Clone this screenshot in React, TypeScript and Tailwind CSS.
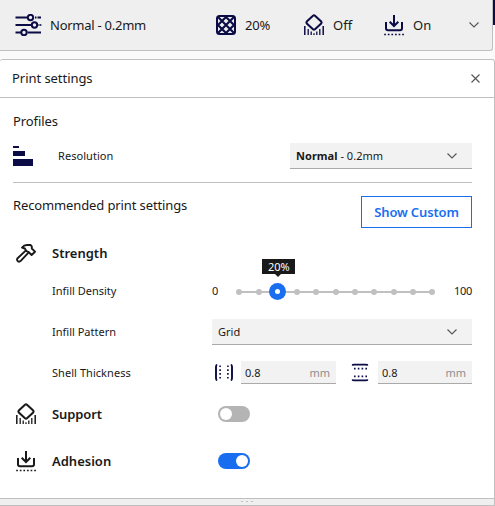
import React from "react";

const NAVY = "#0b0b45";

function SlidersIcon() {
  return (
    <svg width="27" height="22" viewBox="0 0 27 22" fill="none" stroke={NAVY} strokeWidth="2">
      <path d="M.5 3.5H12M20 3.5H21.5M22.5 3.5H26M.5 11H16M23.5 11H24.5M25.2 11H26.3M.5 18.5H6M12.5 18.5H26" />
      <circle cx="15.5" cy="3.5" r="2.7" />
      <circle cx="19.5" cy="11" r="2.7" />
      <circle cx="9" cy="18.5" r="2.7" />
    </svg>
  );
}

function InfillIcon() {
  return (
    <svg width="20" height="20" viewBox="0 0 20 20" fill="none" stroke={NAVY}>
      <rect x="1" y="1" width="18" height="18" rx="2.5" strokeWidth="2" />
      <path
        d="M2 2L18 18M18 2L2 18M1 11L11 1M19 11L9 1M1 9L11 19M19 9L9 19"
        strokeWidth="2.2"
      />
    </svg>
  );
}

function SupportIcon({ color }: { color: string }) {
  return (
    <svg width="20" height="22" viewBox="0 0 20 22" fill="none" stroke={color} strokeWidth="2">
      <path d="M9 1.700Q10 .8 11 1.700L17.200 7.500Q18 8.500 17.200 9.500L11 15.300Q10 16.200 9 15.300L2.800 9.500Q2 8.500 2.800 7.500Z" />
      <path d="M.8 12V21M19.200 12V21" strokeWidth="1.500" />
      <path d="M4.200 15V21M15.800 15V21M7.200 17.500V21M12.800 17.500V21M10 19.200V21" strokeWidth="1.300" />
    </svg>
  );
}

function AdhesionIcon({ color }: { color: string }) {
  return (
    <svg width="20" height="21" viewBox="0 0 20 21" fill="none" stroke={color} strokeWidth="2">
      <path d="M10 0V11M5.700 6.700L10 11L14.300 6.700" />
      <path d="M2 7V13.300Q2 15.300 4 15.300H16Q18 15.300 18 13.300V7" />
      <path d="M.2 19.500H20" strokeWidth="1.700" strokeDasharray="1.700 1.900" />
    </svg>
  );
}

function HammerIcon() {
  return (
    <svg width="20" height="19" viewBox="0 0 20 19" fill="none" stroke="#191919" strokeWidth="1.900" strokeLinejoin="round">
      <path d="M6 3.500Q8 1 11 1H14.500L15.800 2.300V4.500L19 7.700L15.600 11L12.300 7.800L10.500 7.200L8.800 4.500Z" />
      <path d="M9.700 6.600L1.600 14.200Q.5 15.500 1.600 16.800Q3 18.300 4.500 17.100L12.500 8.700" />
    </svg>
  );
}

function ResolutionIcon() {
  return (
    <div className="flex w-[39px] flex-col items-start">
      <div className="h-[2px] w-[6px] bg-[#0b0b45]" />
      <div className="mt-[3px] h-[5px] w-[12px] bg-[#0b0b45]" />
      <div className="mt-[3px] h-[7px] w-[20px] bg-[#0b0b45]" />
    </div>
  );
}

function WallIcon({ rotated = false }: { rotated?: boolean }) {
  return (
    <svg className={rotated ? "rotate-90" : ""} width="18" height="17" viewBox="0 0 18 17" fill="none" stroke={NAVY}>
      <path d="M2.200 .8Q1 1 1 3V14Q1 16 2.200 16.200M15.800 .8Q17 1 17 3V14Q17 16 15.800 16.200" strokeWidth="1.900" />
      <path d="M5.100 1.500V16M12.900 1.500V16" strokeWidth="1.600" strokeDasharray="1.600 2.200" />
    </svg>
  );
}

function Chevron() {
  return (
    <svg width="10" height="6" viewBox="0 0 10 6" fill="none" stroke="#555" strokeWidth="1.100">
      <path d="M.5 .5L5 5L9.500 .5" />
    </svg>
  );
}

function Toggle({ on }: { on: boolean }) {
  return (
    <div className={`flex h-4 w-8 items-center rounded-full px-[2px] ${on ? "justify-end bg-[#196ef0]" : "justify-start bg-[#b4b4b4]"}`}>
      <div className="size-3 rounded-full bg-white" />
    </div>
  );
}

function NumberField({ width }: { width: string }) {
  return (
    <div className={`flex h-[23px] items-center justify-between border-b border-[#aaa] bg-[#f2f2f2] pt-[2px] pr-[6px] pl-1 ${width}`}>
      <span>0.8</span>
      <span className="text-[#8e8e8e]">mm</span>
    </div>
  );
}

function InfillSlider() {
  return (
    <div className="relative ml-[18px] flex h-[6px] w-[199px] items-center justify-between">
      <div className="absolute inset-x-[3px] top-[2px] h-[2px] bg-[#c0c0c0]" />
      {Array.from({ length: 11 }, (_, i) => (
        <div key={i} className="size-[6px] rounded-full bg-[#c0c0c0]" />
      ))}
      <div className="absolute top-[-6px] left-[33px] flex size-[17px] items-center justify-center rounded-full bg-[#196ef0]">
        <div className="size-[5px] rounded-full bg-white" />
      </div>
      <div className="absolute top-[-29.500px] left-[26px] flex h-[15px] w-[33px] items-center justify-center bg-[#191919] pt-px text-[11px] text-white">
        20%
        <svg className="absolute top-[15px] left-[13px]" width="6" height="3" viewBox="0 0 6 3">
          <path d="M0 0H6L3 3Z" fill="#191919" />
        </svg>
      </div>
    </div>
  );
}

export default function App() {
  return (
    <div className="h-[506px] w-[495px] overflow-hidden bg-[#fafafa] font-['Noto_Sans',sans-serif] text-[11px] whitespace-nowrap text-[#191919]">
      <div className="flex h-[51px] justify-between">
        <header className="flex w-[493px] items-center rounded-br-[3px] border-r border-b border-[#c0c0c0] bg-[#efefef] pl-[15px] text-[13px]">
          <div className="flex w-[201px] items-center gap-[8px]">
            <SlidersIcon />
            <span className="pt-px tracking-[-0.25px]">Normal - 0.2mm</span>
          </div>
          <div className="flex w-[88px] items-center gap-[9px]">
            <InfillIcon />
            <span className="pt-px tracking-[-0.2px]">20%</span>
          </div>
          <div className="flex w-[80px] items-center gap-[9px]">
            <SupportIcon color={NAVY} />
            <span className="pt-px">Off</span>
          </div>
          <div className="flex w-[85px] items-center gap-[9px]">
            <AdhesionIcon color={NAVY} />
            <span className="pt-px">On</span>
          </div>
          <Chevron />
        </header>
        <div className="h-[25px] w-[2px] bg-[#0b0b45]" />
      </div>

      <main className="mt-2 flex h-[447px] flex-col rounded-t-[3px] border-t border-r border-b border-[#c0c0c0] bg-white">
        <div className="flex h-[38px] items-center justify-between border-b border-[#c0c0c0] pr-[14px] pl-3 text-[13px]">
          <h1 className="tracking-[-0.05px]">Print settings</h1>
          <svg width="9" height="9" viewBox="0 0 9 9" stroke="#555" strokeWidth="1.100">
            <path d="M.5 .5L8.500 8.500M8.500 .5L.5 8.500" />
          </svg>
        </div>

        <div className="flex flex-1 flex-col pr-[22px] pl-[13px]">
          <h2 className="mt-3 h-[22px] text-[13px] leading-[22px] tracking-[-0.1px]">Profiles</h2>
          <div className="mt-[11px] flex h-[26px] items-center">
            <ResolutionIcon />
            <span className="ml-[6px] flex-1 tracking-[0.05px]">Resolution</span>
            <div className="flex h-[26px] w-[182px] items-center justify-between border-b border-[#aaa] bg-[#f2f2f2] pt-px pr-[15px] pl-[6px]">
              <span className="tracking-[0.03px]"><b>Normal</b> - 0.2mm</span>
              <Chevron />
            </div>
          </div>
          <div className="mt-[13px] h-px bg-[#c0c0c0]" />
          <div className="mt-[13px] flex h-8 justify-between">
            <h2 className="text-[13px] leading-[19px] tracking-[-0.12px]">Recommended print settings</h2>
            <button className="h-8 w-[111px] border border-[#196ef0] pt-px text-[13px] font-semibold tracking-[-0.15px] text-[#196ef0]">Show Custom</button>
          </div>

          <div className="mt-[14px] flex h-[22px] items-center pl-[3px]">
            <div className="w-9"><HammerIcon /></div>
            <h3 className="pt-px text-[13px] font-semibold">Strength</h3>
          </div>
          <div className="mt-4 flex h-[22px] items-center pt-px pl-[39px]">
            <span className="w-[160px]">Infill Density</span>
            <span>0</span>
            <InfillSlider />
            <span className="ml-auto tracking-[-0.3px]">100</span>
          </div>
          <div className="mt-[17px] flex h-[26px] items-center pl-[39px]">
            <span className="w-[160px] pt-px">Infill Pattern</span>
            <div className="flex h-[26px] flex-1 items-center justify-between border-b border-[#aaa] bg-[#f2f2f2] pt-px pr-[15px] pl-[6px]">
              <span>Grid</span>
              <Chevron />
            </div>
          </div>
          <div className="mt-4 flex h-[23px] items-center pl-[39px]">
            <span className="w-[163px] pt-px tracking-[0.05px]">Shell Thickness</span>
            <WallIcon />
            <div className="ml-[8px]"><NumberField width="w-[95px]" /></div>
            <div className="mr-[9px] ml-[15px]"><WallIcon rotated /></div>
            <NumberField width="w-[94px]" />
          </div>
          <div className="mt-[19px] flex h-[22px] items-center pl-[3px]">
            <div className="w-9"><SupportIcon color="#191919" /></div>
            <h3 className="w-[166px] pt-px text-[13px] font-semibold tracking-[-0.1px]">Support</h3>
            <Toggle on={false} />
          </div>
          <div className="mt-[25px] flex h-[22px] items-center pl-[3px]">
            <div className="w-9"><AdhesionIcon color="#191919" /></div>
            <h3 className="w-[166px] pt-px text-[13px] font-semibold">Adhesion</h3>
            <Toggle on />
          </div>
        </div>

        <footer className="flex h-[7px] justify-center gap-[3px] border-t border-[#c0c0c0] bg-[#efefef] pt-[2px]">
          <div className="h-px w-[2px] bg-[#c0c0c0]" />
          <div className="h-px w-[2px] bg-[#c0c0c0]" />
          <div className="h-px w-[2px] bg-[#c0c0c0]" />
        </footer>
      </main>
    </div>
  );
}
